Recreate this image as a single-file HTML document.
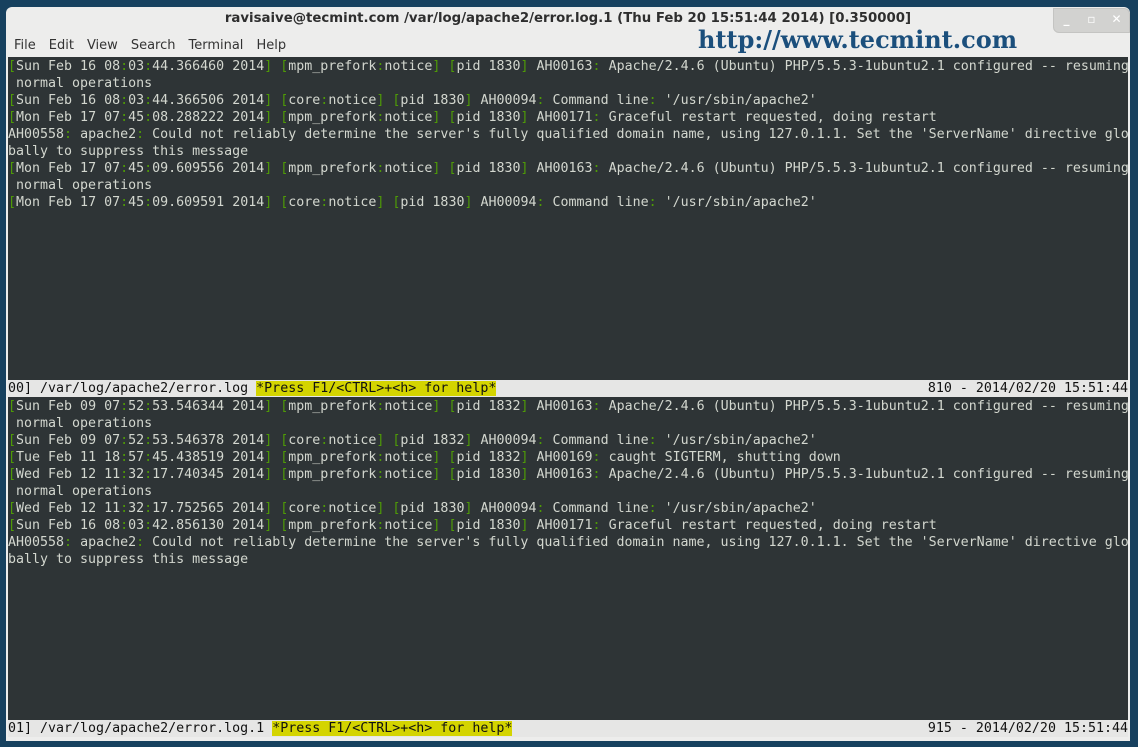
<!DOCTYPE html>
<html><head><meta charset="utf-8"><style>
html,body{margin:0;padding:0;width:1138px;height:747px;overflow:hidden;background:#17415f;}
#win{position:absolute;left:6px;top:7px;width:1124px;height:734px;background:#ededec;border-radius:6px 6px 0 0;}
#title{position:absolute;left:0;top:4px;width:1124px;text-align:center;font:bold 13.3px "DejaVu Sans","Liberation Sans",sans-serif;color:#2e2e2e;}
#btns{position:absolute;left:1047px;top:1px;width:75px;height:23px;background:#d2d2d0;border-radius:0 6px 0 6px;border:1px solid #c4c4c2;}
#btns span{position:absolute;top:3px;width:25px;text-align:center;font:bold 12px "DejaVu Sans",sans-serif;color:#fff;}
#menu{position:absolute;left:8px;top:31px;font:13px "DejaVu Sans","Liberation Sans",sans-serif;color:#333;}
#menu span{margin-right:13px}
#logo{position:absolute;left:692px;top:18px;font:bold 24px "DejaVu Serif","Liberation Serif",serif;color:#1b4f7c;}
#term{position:absolute;left:8px;top:57px;width:1120px;height:680px;background:#2e3436;}
.l{position:absolute;left:0;height:17px;white-space:pre;font:13.3px "DejaVu Sans Mono","Liberation Mono",monospace;line-height:17px;color:#d3d7cf;margin-top:1px}
.g{color:#4e9a06}
.bar{position:absolute;left:0;width:1120px;height:17px;background:#e6e6e5;color:#111;}
.y{background:#d4d400;}
.r{position:absolute;right:0;top:0}
</style></head><body>
<div id="win">
<div id="title">ravisaive@tecmint.com /var/log/apache2/error.log.1 (Thu Feb 20 15:51:44 2014) [0.350000]</div>
<div id="btns"><span style="left:0">_</span><span style="left:25px">▫</span><span style="left:50px">✕</span></div>
<div id="menu"><span>File</span><span>Edit</span><span>View</span><span>Search</span><span>Terminal</span><span>Help</span></div>
<div id="logo">http://www.tecmint.com</div>
</div>
<div id="term">
<div class="l" style="top:0"><span class="g">[</span>Sun Feb 16 08<span class="g">:</span>03<span class="g">:</span>44.366460 2014<span class="g">]</span> <span class="g">[</span>mpm_prefork<span class="g">:</span>notice<span class="g">]</span> <span class="g">[</span>pid 1830<span class="g">]</span> AH00163<span class="g">:</span> Apache/2.4.6 (Ubuntu) PHP/5.5.3-1ubuntu2.1 configured -- resuming</div>
<div class="l" style="top:17px"> normal operations</div>
<div class="l" style="top:34px"><span class="g">[</span>Sun Feb 16 08<span class="g">:</span>03<span class="g">:</span>44.366506 2014<span class="g">]</span> <span class="g">[</span>core<span class="g">:</span>notice<span class="g">]</span> <span class="g">[</span>pid 1830<span class="g">]</span> AH00094<span class="g">:</span> Command line<span class="g">:</span> '/usr/sbin/apache2'</div>
<div class="l" style="top:51px"><span class="g">[</span>Mon Feb 17 07<span class="g">:</span>45<span class="g">:</span>08.288222 2014<span class="g">]</span> <span class="g">[</span>mpm_prefork<span class="g">:</span>notice<span class="g">]</span> <span class="g">[</span>pid 1830<span class="g">]</span> AH00171<span class="g">:</span> Graceful restart requested, doing restart</div>
<div class="l" style="top:68px">AH00558<span class="g">:</span> apache2<span class="g">:</span> Could not reliably determine the server's fully qualified domain name, using 127.0.1.1. Set the 'ServerName' directive glo</div>
<div class="l" style="top:85px">bally to suppress this message</div>
<div class="l" style="top:102px"><span class="g">[</span>Mon Feb 17 07<span class="g">:</span>45<span class="g">:</span>09.609556 2014<span class="g">]</span> <span class="g">[</span>mpm_prefork<span class="g">:</span>notice<span class="g">]</span> <span class="g">[</span>pid 1830<span class="g">]</span> AH00163<span class="g">:</span> Apache/2.4.6 (Ubuntu) PHP/5.5.3-1ubuntu2.1 configured -- resuming</div>
<div class="l" style="top:119px"> normal operations</div>
<div class="l" style="top:136px"><span class="g">[</span>Mon Feb 17 07<span class="g">:</span>45<span class="g">:</span>09.609591 2014<span class="g">]</span> <span class="g">[</span>core<span class="g">:</span>notice<span class="g">]</span> <span class="g">[</span>pid 1830<span class="g">]</span> AH00094<span class="g">:</span> Command line<span class="g">:</span> '/usr/sbin/apache2'</div>

<div class="l bar" style="top:322px">00] /var/log/apache2/error.log <span class="y">*Press F1/&lt;CTRL&gt;+&lt;h&gt; for help*</span><span class="r">810 - 2014/02/20 15:51:44</span></div>

<div class="l" style="top:340px"><span class="g">[</span>Sun Feb 09 07<span class="g">:</span>52<span class="g">:</span>53.546344 2014<span class="g">]</span> <span class="g">[</span>mpm_prefork<span class="g">:</span>notice<span class="g">]</span> <span class="g">[</span>pid 1832<span class="g">]</span> AH00163<span class="g">:</span> Apache/2.4.6 (Ubuntu) PHP/5.5.3-1ubuntu2.1 configured -- resuming</div>
<div class="l" style="top:357px"> normal operations</div>
<div class="l" style="top:374px"><span class="g">[</span>Sun Feb 09 07<span class="g">:</span>52<span class="g">:</span>53.546378 2014<span class="g">]</span> <span class="g">[</span>core<span class="g">:</span>notice<span class="g">]</span> <span class="g">[</span>pid 1832<span class="g">]</span> AH00094<span class="g">:</span> Command line<span class="g">:</span> '/usr/sbin/apache2'</div>
<div class="l" style="top:391px"><span class="g">[</span>Tue Feb 11 18<span class="g">:</span>57<span class="g">:</span>45.438519 2014<span class="g">]</span> <span class="g">[</span>mpm_prefork<span class="g">:</span>notice<span class="g">]</span> <span class="g">[</span>pid 1832<span class="g">]</span> AH00169<span class="g">:</span> caught SIGTERM, shutting down</div>
<div class="l" style="top:408px"><span class="g">[</span>Wed Feb 12 11<span class="g">:</span>32<span class="g">:</span>17.740345 2014<span class="g">]</span> <span class="g">[</span>mpm_prefork<span class="g">:</span>notice<span class="g">]</span> <span class="g">[</span>pid 1830<span class="g">]</span> AH00163<span class="g">:</span> Apache/2.4.6 (Ubuntu) PHP/5.5.3-1ubuntu2.1 configured -- resuming</div>
<div class="l" style="top:425px"> normal operations</div>
<div class="l" style="top:442px"><span class="g">[</span>Wed Feb 12 11<span class="g">:</span>32<span class="g">:</span>17.752565 2014<span class="g">]</span> <span class="g">[</span>core<span class="g">:</span>notice<span class="g">]</span> <span class="g">[</span>pid 1830<span class="g">]</span> AH00094<span class="g">:</span> Command line<span class="g">:</span> '/usr/sbin/apache2'</div>
<div class="l" style="top:459px"><span class="g">[</span>Sun Feb 16 08<span class="g">:</span>03<span class="g">:</span>42.856130 2014<span class="g">]</span> <span class="g">[</span>mpm_prefork<span class="g">:</span>notice<span class="g">]</span> <span class="g">[</span>pid 1830<span class="g">]</span> AH00171<span class="g">:</span> Graceful restart requested, doing restart</div>
<div class="l" style="top:476px">AH00558<span class="g">:</span> apache2<span class="g">:</span> Could not reliably determine the server's fully qualified domain name, using 127.0.1.1. Set the 'ServerName' directive glo</div>
<div class="l" style="top:493px">bally to suppress this message</div>

<div class="l bar" style="top:662px">01] /var/log/apache2/error.log.1 <span class="y">*Press F1/&lt;CTRL&gt;+&lt;h&gt; for help*</span><span class="r">915 - 2014/02/20 15:51:44</span></div>
</div>
</body></html>
